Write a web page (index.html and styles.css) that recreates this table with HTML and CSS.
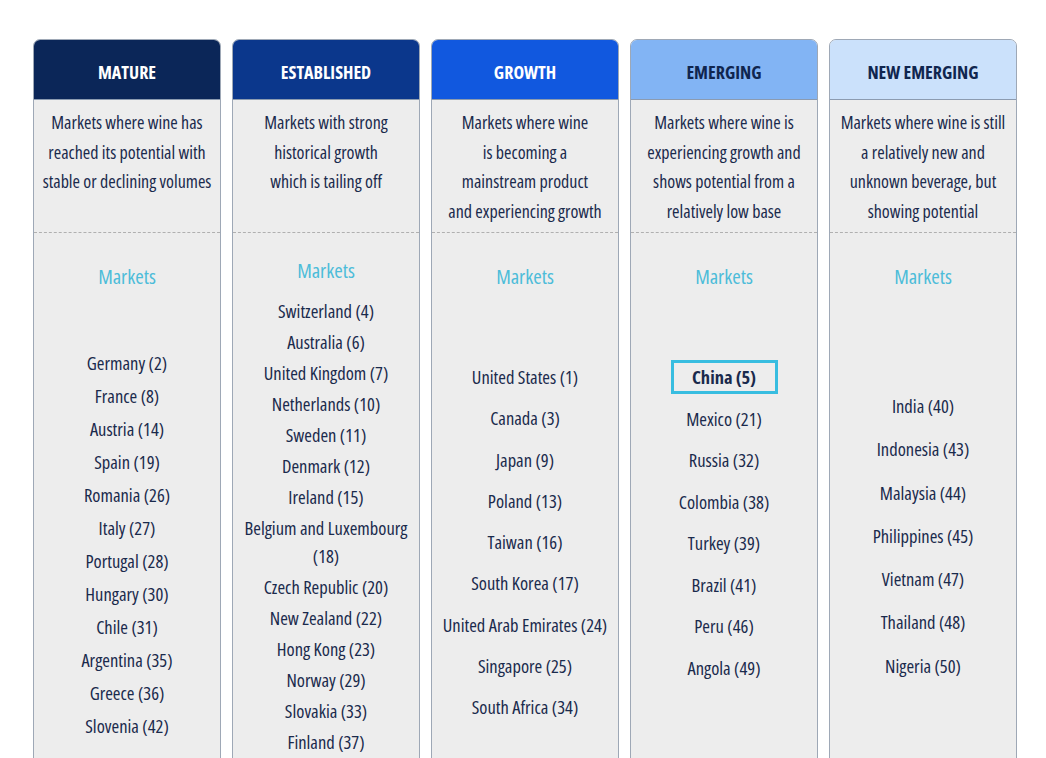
FILE: index.html
```html
<!DOCTYPE html>
<html lang="en">
<head>
<meta charset="utf-8">
<title>Wine market segments</title>
<link rel="stylesheet" href="styles.css">
</head>
<body>
<div class="board">
  <section class="col col--mature">
    <header class="col__head">MATURE</header>
    <p class="col__desc">Markets where wine has<br>reached its potential with<br>stable or declining volumes</p>
    <div class="col__body">
      <h3 class="col__title">Markets</h3>
      <ul class="list list--mature">
        <li>Germany (2)</li><li>France (8)</li><li>Austria (14)</li><li>Spain (19)</li><li>Romania (26)</li><li>Italy (27)</li><li>Portugal (28)</li><li>Hungary (30)</li><li>Chile (31)</li><li>Argentina (35)</li><li>Greece (36)</li><li>Slovenia (42)</li>
      </ul>
    </div>
  </section>
  <section class="col col--established">
    <header class="col__head">ESTABLISHED</header>
    <p class="col__desc">Markets with strong<br>historical growth<br>which is tailing off</p>
    <div class="col__body">
      <h3 class="col__title col__title--high">Markets</h3>
      <ul class="list list--established">
        <li>Switzerland (4)</li><li>Australia (6)</li><li>United Kingdom (7)</li><li>Netherlands (10)</li><li>Sweden (11)</li><li>Denmark (12)</li><li>Ireland (15)</li><li>Belgium and Luxembourg<br>(18)</li><li>Czech Republic (20)</li><li>New Zealand (22)</li><li>Hong Kong (23)</li><li>Norway (29)</li><li>Slovakia (33)</li><li>Finland (37)</li>
      </ul>
    </div>
  </section>
  <section class="col col--growth">
    <header class="col__head">GROWTH</header>
    <p class="col__desc">Markets where wine<br>is becoming a<br>mainstream product<br>and experiencing growth</p>
    <div class="col__body">
      <h3 class="col__title">Markets</h3>
      <ul class="list list--growth">
        <li>United States (1)</li><li>Canada (3)</li><li>Japan (9)</li><li>Poland (13)</li><li>Taiwan (16)</li><li>South Korea (17)</li><li>United Arab Emirates (24)</li><li>Singapore (25)</li><li>South Africa (34)</li>
      </ul>
    </div>
  </section>
  <section class="col col--emerging">
    <header class="col__head">EMERGING</header>
    <p class="col__desc">Markets where wine is<br>experiencing growth and<br>shows potential from a<br>relatively low base</p>
    <div class="col__body">
      <h3 class="col__title">Markets</h3>
      <ul class="list list--emerging">
        <li><span class="highlight">China (5)</span></li><li>Mexico (21)</li><li>Russia (32)</li><li>Colombia (38)</li><li>Turkey (39)</li><li>Brazil (41)</li><li>Peru (46)</li><li>Angola (49)</li>
      </ul>
    </div>
  </section>
  <section class="col col--new">
    <header class="col__head">NEW EMERGING</header>
    <p class="col__desc">Markets where wine is still<br>a relatively new and<br>unknown beverage, but<br>showing potential</p>
    <div class="col__body">
      <h3 class="col__title">Markets</h3>
      <ul class="list list--new">
        <li>India (40)</li><li>Indonesia (43)</li><li>Malaysia (44)</li><li>Philippines (45)</li><li>Vietnam (47)</li><li>Thailand (48)</li><li>Nigeria (50)</li>
      </ul>
    </div>
  </section>
</div>
</body>
</html>
```

FILE: styles.css
```css
* { box-sizing: border-box; }
html, body { margin: 0; padding: 0; background: #ffffff; overflow: hidden; }
body {
  font-family: "Open Sans", "Liberation Sans", sans-serif;
  font-stretch: 80%;
  color: #1a2a4c;
}
.board {
  display: flex;
  gap: 11px;
  padding: 39px 0 0 33px;
  height: 758px;
}
.col {
  width: 188px;
  height: 740px;
  flex: none;
  display: flex;
  flex-direction: column;
  background: #ededed;
  border: 1px solid #9ea8b6;
  border-radius: 7px 7px 0 0;
  overflow: hidden;
}
.col__head {
  height: 61px;
  margin: -1px -1px 0;
  padding-top: 5px;
  display: flex;
  align-items: center;
  justify-content: center;
  font-weight: bold;
  font-size: 18px;
  border-radius: 7px 7px 0 0;
  border-bottom: 1px solid #8c9bb0;
  white-space: nowrap;
}
.col--mature .col__head { background: #0b2658; color: #fff; }
.col--established .col__head { background: #0b378c; color: #fff; }
.col--growth .col__head { background: #1158df; color: #fff; }
.col--emerging .col__head { background: #82b4f4; color: #10264f; }
.col--new .col__head { background: #cbe1fb; color: #10264f; }
.col__desc {
  margin: 0;
  height: 133px;
  flex: none;
  padding-top: 8px;
  text-align: center;
  font-size: 18px;
  line-height: 29.7px;
  white-space: nowrap;
  border-bottom: 1.5px dashed #b0b0b0;
}
.col__body { text-align: center; white-space: nowrap; }
.col__title {
  margin: 28px 0 0;
  font-weight: normal;
  font-size: 20.5px;
  line-height: 30px;
  color: #4cbcd9;
}
.col__title--high { margin-top: 22px; }
.list {
  list-style: none;
  margin: 0;
  padding: 0;
  font-size: 18.5px;
}
.list--mature { margin-top: 55px; line-height: 33px; }
.list--established { margin-top: 10px; }
.list--established li { line-height: 28px; padding: 1.5px 0; }
.list--growth { margin-top: 65px; line-height: 41.3px; }
.list--emerging { margin-top: 65px; line-height: 41.5px; }
.list--new { margin-top: 93px; line-height: 43.3px; }
.highlight {
  display: inline-block;
  width: 107px;
  line-height: 28px;
  border: 3px solid #38bde0;
  font-weight: bold;
}
```
